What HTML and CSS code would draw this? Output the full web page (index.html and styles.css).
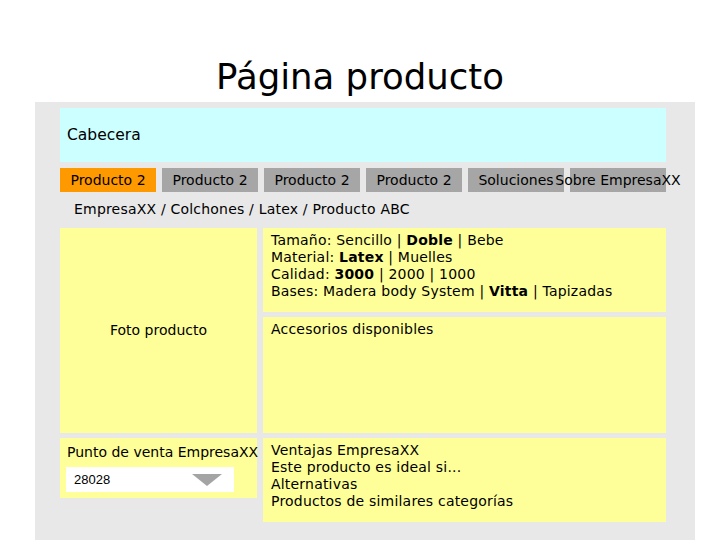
FILE: index.html
```html
<!DOCTYPE html>
<html lang="es">
<head>
    <meta charset="UTF-8">
    <title>Página producto</title>
    <link rel="stylesheet" href="styles.css">
</head>
<body>
    <h1 class="title">Página producto</h1>
    <div class="panel">
        <div class="header">Cabecera</div>
        <div class="tabs">
            <div class="tab active">Producto 2</div>
            <div class="tab">Producto 2</div>
            <div class="tab">Producto 2</div>
            <div class="tab">Producto 2</div>
            <div class="tab">Soluciones</div>
            <div class="tab">Sobre EmpresaXX</div>
        </div>
        <div class="crumbs">EmpresaXX / Colchones / Latex / Producto ABC</div>
        <div class="grid">
            <div class="box photo">Foto producto</div>
            <div class="box text">
                Tamaño: Sencillo | <b>Doble</b> | Bebe<br>
                Material: <b>Latex</b> | Muelles<br>
                Calidad: <b>3000</b> | 2000 | 1000<br>
                Bases: Madera body System | <b>Vitta</b> | Tapizadas
            </div>
            <div class="box text">Accesorios disponibles</div>
            <div class="box shop">
                <div class="shop-label">Punto de venta EmpresaXX</div>
                <div class="select">
                    <span>28028</span>
                    <svg width="30" height="12" viewBox="0 0 30 12"><polygon points="0,0 30,0 15,12" fill="#a4a4a4"/></svg>
                </div>
            </div>
            <div class="box text">
                Ventajas EmpresaXX<br>
                Este producto es ideal si...<br>
                Alternativas<br>
                Productos de similares categorías
            </div>
        </div>
    </div>
</body>
</html>
```

FILE: styles.css
```css
body {
    margin: 0;
    background: white;
    font-family: "DejaVu Sans", Verdana, sans-serif;
    font-size: 14px;
    color: black;
    overflow: hidden;
}

.title {
    margin: 0 0 4px 0;
    padding-top: 56px;
    height: 42px;
    line-height: 42px;
    font-size: 35.5px;
    font-weight: normal;
    text-align: center;
}

.panel {
    margin-left: 35px;
    width: 606px;
    padding: 6px 29px 40px 25px;
    background: #e8e8e8;
}

.header {
    height: 54px;
    line-height: 54px;
    padding-left: 7px;
    background: #ccffff;
    font-size: 15.5px;
}

.tabs {
    display: flex;
    gap: 6px;
    margin-top: 6px;
}

.tab {
    width: 96px;
    height: 24px;
    line-height: 24px;
    background: #a6a6a6;
    white-space: nowrap;
    display: flex;
    justify-content: center;
}

.tab.active {
    background: #ff9900;
}

.crumbs {
    padding: 9px 14px 10px;
    line-height: 17px;
    letter-spacing: 0.2px;
}

.grid {
    display: grid;
    grid-template-columns: 197px 403px;
    grid-template-rows: 84px 116px 84px;
    column-gap: 6px;
    row-gap: 5px;
}

.box {
    background: #ffff99;
    line-height: 17px;
}

.photo {
    grid-row: span 2;
    display: flex;
    align-items: center;
    justify-content: center;
}

.text {
    padding: 4px 8px;
    letter-spacing: 0.2px;
}

.shop {
    align-self: start;
    height: 60px;
    padding: 6px 0 0 6px;
    box-sizing: border-box;
}

.shop-label {
    padding-left: 1px;
    white-space: nowrap;
}

.select {
    display: flex;
    align-items: center;
    justify-content: space-between;
    width: 168px;
    height: 25px;
    margin-top: 6px;
    padding: 0 12px 0 8px;
    box-sizing: border-box;
    background: white;
    font-family: "Liberation Sans", Arial, sans-serif;
    font-size: 13px;
}
```
